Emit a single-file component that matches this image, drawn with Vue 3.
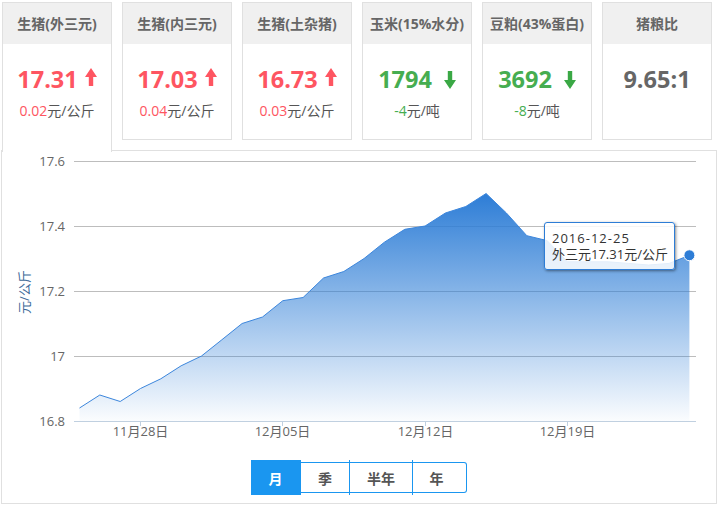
<script setup>
import { ref } from "vue";

const cards = [
  { title: "生猪(外三元)", price: "17.31", trend: "up", change: "0.02", unit: "元/公斤" },
  { title: "生猪(内三元)", price: "17.03", trend: "up", change: "0.04", unit: "元/公斤" },
  { title: "生猪(土杂猪)", price: "16.73", trend: "up", change: "0.03", unit: "元/公斤" },
  { title: "玉米(15%水分)", price: "1794", trend: "down", change: "-4", unit: "元/吨" },
  { title: "豆粕(43%蛋白)", price: "3692", trend: "down", change: "-8", unit: "元/吨" },
  { title: "猪粮比", price: "9.65:1", trend: "flat" },
];

const activeCard = ref(0);
const ranges = ["月", "季", "半年", "年"];
const activeRange = ref("月");

// chart scale, same numbers as the axis
const left = 74;
const right = 696;
const firstX = 79.5;
const stepX = 20.33;
const yOf = (v) => 421 - (v - 16.8) * 325;

const values = [
  16.84, 16.88, 16.86, 16.9, 16.93, 16.97, 17, 17.05, 17.1, 17.12, 17.17,
  17.18, 17.24, 17.26, 17.3, 17.35, 17.39, 17.4, 17.44, 17.46, 17.5, 17.44,
  17.37, 17.355, 17.29, 17.29, 17.29, 17.285, 17.28, 17.285, 17.31,
];

const points = values.map((v, i) => [firstX + i * stepX, yOf(v)]);
const linePath = points.map((p, i) => (i ? "L" : "M") + p[0].toFixed(1) + " " + p[1].toFixed(1)).join(" ");
const lastX = points[points.length - 1][0];
const lastY = points[points.length - 1][1];
const areaPath = linePath + ` L${lastX.toFixed(1)} 421 L${firstX} 421 Z`;

const yTicks = [
  { label: "17.6", y: 161 },
  { label: "17.4", y: 226 },
  { label: "17.2", y: 291 },
  { label: "17", y: 356 },
];
const xTicks = [
  { label: "11月28日", x: 140.5 },
  { label: "12月05日", x: 282.5 },
  { label: "12月12日", x: 425.5 },
  { label: "12月19日", x: 567.5 },
];
</script>

<template>
  <div class="page">
    <div class="cards">
      <div
        v-for="(card, i) in cards"
        :key="card.title"
        class="card"
        :class="{ active: activeCard === i }"
        @click="activeCard = i"
      >
        <div class="card-title">{{ card.title }}</div>
        <div class="card-price" :class="card.trend">
          <span>{{ card.price }}</span>
          <svg v-if="card.trend === 'up'" class="arrow" viewBox="0 0 12 18">
            <path d="M6 0 L12 9 H8.2 V18 H3.8 V9 H0 Z" fill="#fe5561" />
          </svg>
          <svg v-if="card.trend === 'down'" class="arrow" viewBox="0 0 12 18">
            <path d="M6 18 L12 9 H8.2 V0 H3.8 V9 H0 Z" fill="#3aa845" />
          </svg>
        </div>
        <div v-if="card.change" class="card-change">
          <span :class="card.trend">{{ card.change }}</span>{{ card.unit }}
        </div>
      </div>
    </div>

    <div class="panel">
      <svg class="chart" width="714" height="352" viewBox="2 151 714 352">
        <defs>
          <linearGradient id="areaFill" x1="0" y1="0" x2="0" y2="1">
            <stop offset="0" stop-color="#2d7dd6" />
            <stop offset="1" stop-color="#2d7dd6" stop-opacity="0.02" />
          </linearGradient>
        </defs>

        <line
          v-for="t in yTicks"
          :key="t.label"
          :x1="left"
          :x2="right"
          :y1="t.y + 0.5"
          :y2="t.y + 0.5"
          stroke="#bdbdbd"
        />
        <path :d="areaPath" fill="url(#areaFill)" />
        <path :d="linePath" fill="none" stroke="#3c86dc" />
        <line :x1="left" :x2="right" y1="421.5" y2="421.5" stroke="#c0d0e0" />
        <line
          v-for="t in xTicks"
          :key="t.x"
          :x1="t.x"
          :x2="t.x"
          y1="421"
          y2="426"
          stroke="#c0d0e0"
        />

        <text v-for="t in yTicks" :key="t.label" x="65" :y="t.y + 5" text-anchor="end" class="axis">{{ t.label }}</text>
        <text x="65" y="426" text-anchor="end" class="axis">16.8</text>
        <text v-for="t in xTicks" :key="t.label" :x="t.x" y="436" text-anchor="middle" class="axis">{{ t.label }}</text>
        <text transform="translate(29 292) rotate(-90)" text-anchor="middle" class="axis-name">元/公斤</text>

        <circle :cx="lastX" :cy="lastY" r="5.5" fill="#2d7dd6" stroke="#fff" />
      </svg>

      <div class="tooltip">
        <div class="tooltip-date">2016-12-25</div>
        <div>外三元17.31元/公斤</div>
      </div>

      <div class="ranges">
        <button
          v-for="r in ranges"
          :key="r"
          class="range"
          :class="{ on: activeRange === r, wide: r === '半年' }"
          @click="activeRange = r"
        >
          {{ r }}
        </button>
      </div>
    </div>
  </div>
</template>

<style>
body {
  background: #fff;
}
</style>

<style scoped>
.page {
  width: 721px;
  height: 509px;
  font-family: "Open Sans", "Noto Sans CJK SC", sans-serif;
  color: #555;
  overflow: hidden;
}

.cards {
  display: flex;
  gap: 10px;
  padding: 2px 0 0 2px;
  height: 138px;
}

.card {
  width: 110px;
  height: 138px;
  box-sizing: border-box;
  border: 1px solid #e0e0e0;
  background: #fff;
  text-align: center;
  cursor: pointer;
}

.card.active {
  height: 150px;
  border-bottom: none;
  position: relative;
  z-index: 1;
}

.card-title {
  height: 41px;
  line-height: 41px;
  background: #f0f0f0;
  font-size: 14px;
  font-weight: 700;
  color: #666;
  white-space: nowrap;
}

.card-price {
  margin-top: 20px;
  height: 30px;
  line-height: 30px;
  font-size: 23.5px;
  font-weight: 700;
  color: #666;
  display: flex;
  justify-content: center;
  align-items: center;
  gap: 7px;
}

.card-price.up {
  color: #fe5561;
}

.card-price.down {
  color: #46ad50;
}

.card-price.down .arrow {
  margin-left: 5px;
  margin-top: 2px;
}

.card-price.up .arrow {
  margin-top: -4px;
}

.arrow {
  width: 12px;
  height: 18px;
}

.card-change {
  margin-top: 7px;
  font-size: 14px;
  line-height: 20px;
  color: #555;
}

.card-change .up {
  color: #fe5561;
}

.card-change .down {
  color: #46ad50;
}

.panel {
  position: relative;
  width: 716px;
  height: 354px;
  margin: 10px 0 0 1px;
  box-sizing: border-box;
  border: 1px solid #e0e0e0;
  background: #fff;
}

.chart {
  display: block;
}

.axis {
  font-size: 13px;
  fill: #666;
}

.axis-name {
  font-size: 13px;
  fill: #3d6a99;
}

.tooltip {
  position: absolute;
  left: 542px;
  top: 71px;
  width: 131px;
  height: 48px;
  box-sizing: border-box;
  padding: 7px 0 0 7px;
  border: 1px solid #2d7dd6;
  border-radius: 3px;
  background: rgba(255, 255, 255, 0.85);
  box-shadow: 1px 1px 3px rgba(0, 0, 0, 0.45);
  font-size: 13px;
  line-height: 16px;
  color: #333;
  white-space: nowrap;
}

.tooltip-date {
  letter-spacing: 1px;
}

.ranges {
  position: absolute;
  left: 249px;
  top: 311px;
  display: flex;
  height: 31px;
}

.range {
  position: relative;
  width: 49px;
  height: 31px;
  padding: 0;
  box-sizing: border-box;
  border: 1px solid #1a96f0;
  border-left: none;
  background: #fff;
  font: 700 14px "Open Sans", "Noto Sans CJK SC", sans-serif;
  color: #555;
  cursor: pointer;
}

/* divider sticks out a little above and below the outline */
.range::after {
  content: "";
  position: absolute;
  right: -1px;
  top: -3px;
  bottom: -3px;
  width: 1px;
  background: #1a96f0;
}

.range.wide {
  width: 63px;
}

.range:last-child {
  width: 54px;
  padding-right: 6px;
  border-radius: 0 3px 3px 0;
}

.range:last-child::after,
.range.on::after {
  display: none;
}

.range.on {
  width: 50px;
  height: 35px;
  margin-top: -2px;
  background: #1a96f0;
  border-color: #1a96f0;
  color: #fff;
}
</style>
